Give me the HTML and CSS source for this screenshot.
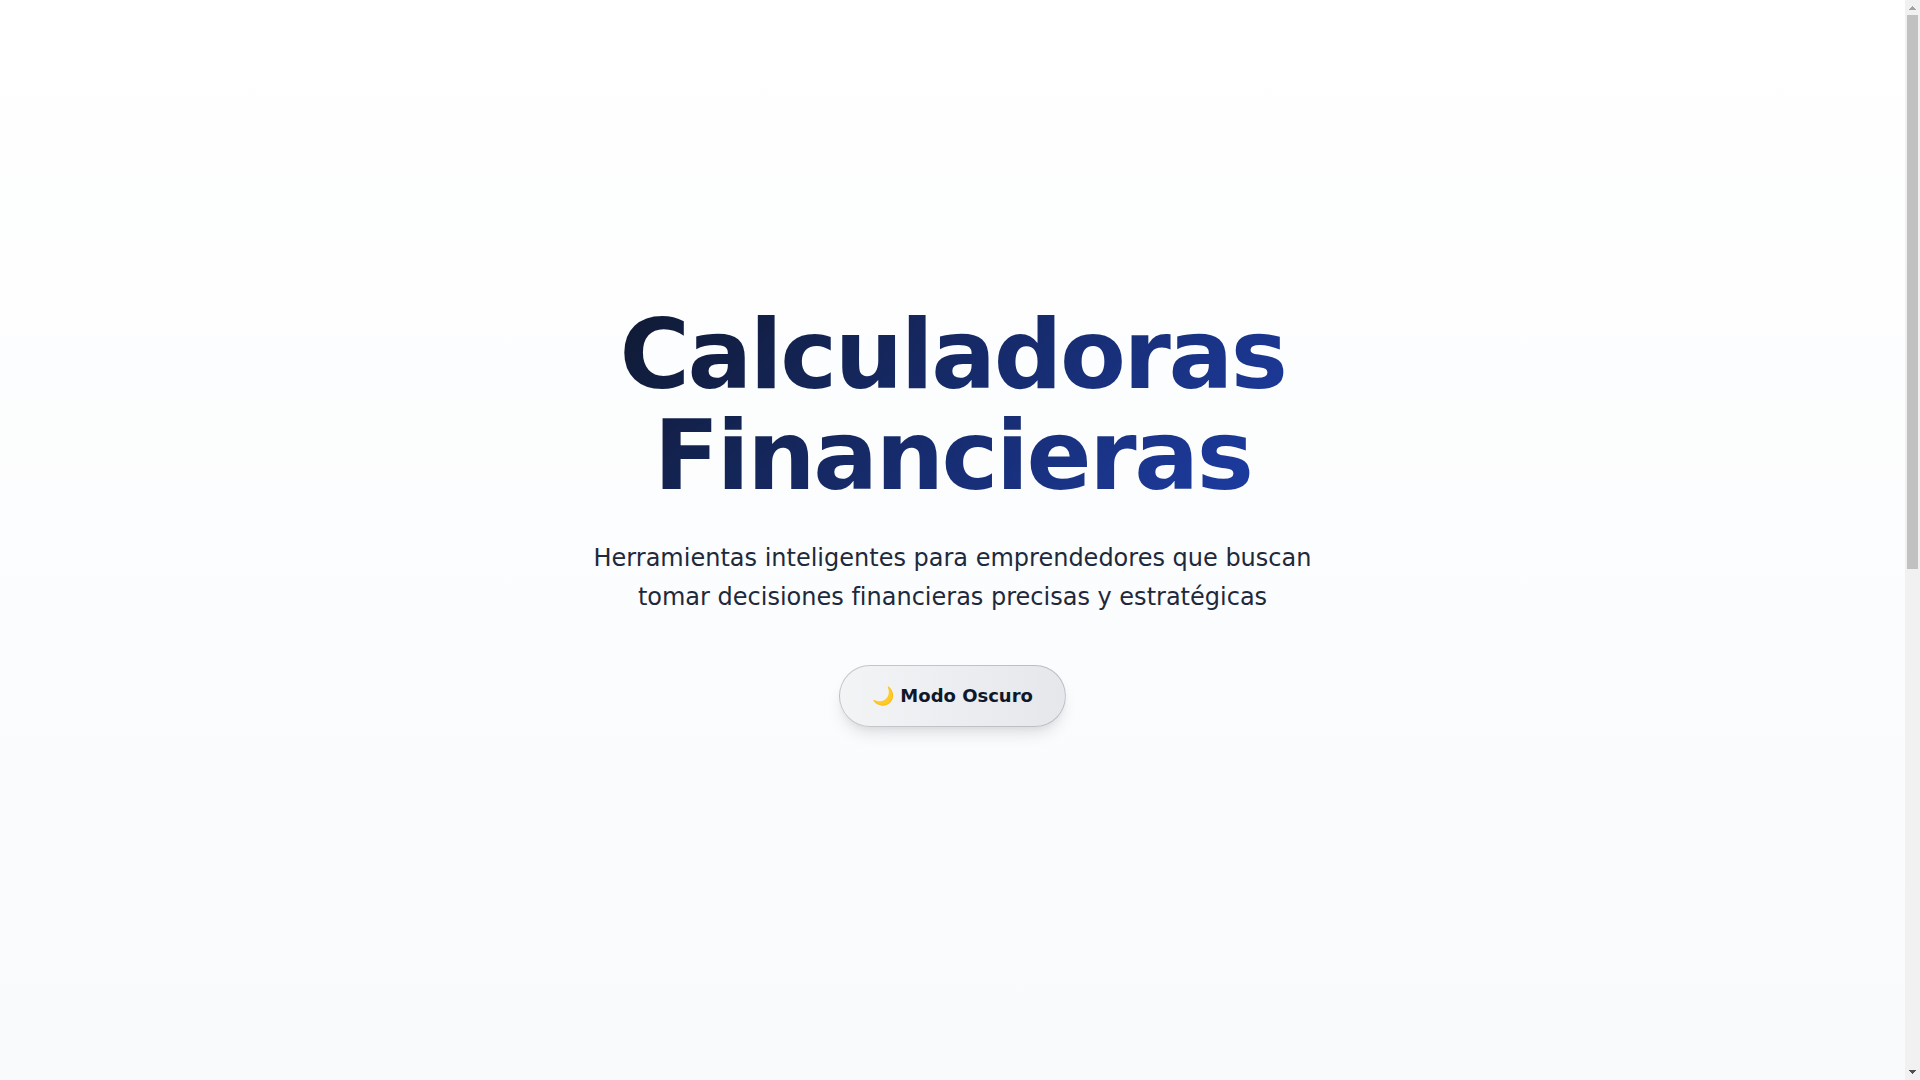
FILE: index.html
```html
<!DOCTYPE html>
<html lang="es">
<head>
  <meta charset="UTF-8">
  <meta name="viewport" content="width=device-width, initial-scale=1.0">
  <title>Calculadoras Financieras</title>
  <link rel="stylesheet" href="styles.css">
</head>
<body>
  <header class="hero">
    <div class="hero-content">
      <h1>Calculadoras Financieras</h1>
      <p>Herramientas inteligentes para emprendedores que buscan tomar decisiones financieras precisas y estratégicas</p>
      <button type="button" class="theme-toggle">🌙 Modo Oscuro</button>
    </div>
  </header>
  <div class="scrollbar" aria-hidden="true">
    <svg class="scroll-up" width="15" height="15" viewBox="0 0 15 15" shape-rendering="crispEdges">
      <path d="M7 6h1v1h1v1h1v1h1v1H4V9h1V8h1V7h1z"/>
    </svg>
    <div class="scroll-track">
      <div class="scroll-thumb"></div>
    </div>
    <svg class="scroll-down" width="15" height="15" viewBox="0 0 15 15" shape-rendering="crispEdges">
      <path d="M4 5h7v1h-1v1H9v1H8v1H7V8H6V7H5V6H4z"/>
    </svg>
  </div>
</body>
</html>
```

FILE: styles.css
```css
* {
  margin: 0;
  padding: 0;
  box-sizing: border-box;
}

body {
  display: flex;
  min-height: 100vh;
  font-family: "DejaVu Sans", sans-serif;
  background: #f8fafc;
  color: #0f172a;
}

.hero {
  flex: 1;
  display: flex;
  align-items: center;
  justify-content: center;
  padding: 0 32px 48px;
  text-align: center;
  background: linear-gradient(180deg, #ffffff 0%, #f8fafc 100%);
}

.hero-content {
  max-width: 800px;
}

.hero h1 {
  font-size: 96px;
  font-weight: 800;
  line-height: 101px;
  letter-spacing: -0.025em;
  margin-bottom: 32px;
  background: linear-gradient(135deg, #0f172a 0%, #1e40af 100%);
  -webkit-background-clip: text;
  background-clip: text;
  color: transparent;
}

.hero p {
  max-width: 750px;
  font-size: 24px;
  line-height: 39px;
  color: #1e293b;
  margin: 0 auto 48px;
}

.theme-toggle {
  padding: 20px 32px;
  border: 1px solid rgba(15, 23, 42, 0.2);
  border-radius: 50px;
  background: linear-gradient(90deg, #f3f4f6, #e5e7eb);
  box-shadow: 0 10px 15px -3px rgba(0, 0, 0, 0.1), 0 4px 6px -2px rgba(0, 0, 0, 0.05);
  color: #0f172a;
  font-family: inherit;
  font-size: 18px;
  font-weight: 600;
  line-height: 20px;
  cursor: pointer;
}

.scrollbar {
  display: flex;
  flex-direction: column;
  width: 15px;
  background: #f1f1f1;
}

.scroll-track {
  flex: 1;
  display: flex;
  flex-direction: column;
  padding: 0 2px;
}

.scroll-thumb {
  flex: 0 0 52.75%;
  background: #c1c1c1;
}

.scroll-up {
  fill: #a3a3a3;
}

.scroll-down {
  fill: #505050;
}
```
